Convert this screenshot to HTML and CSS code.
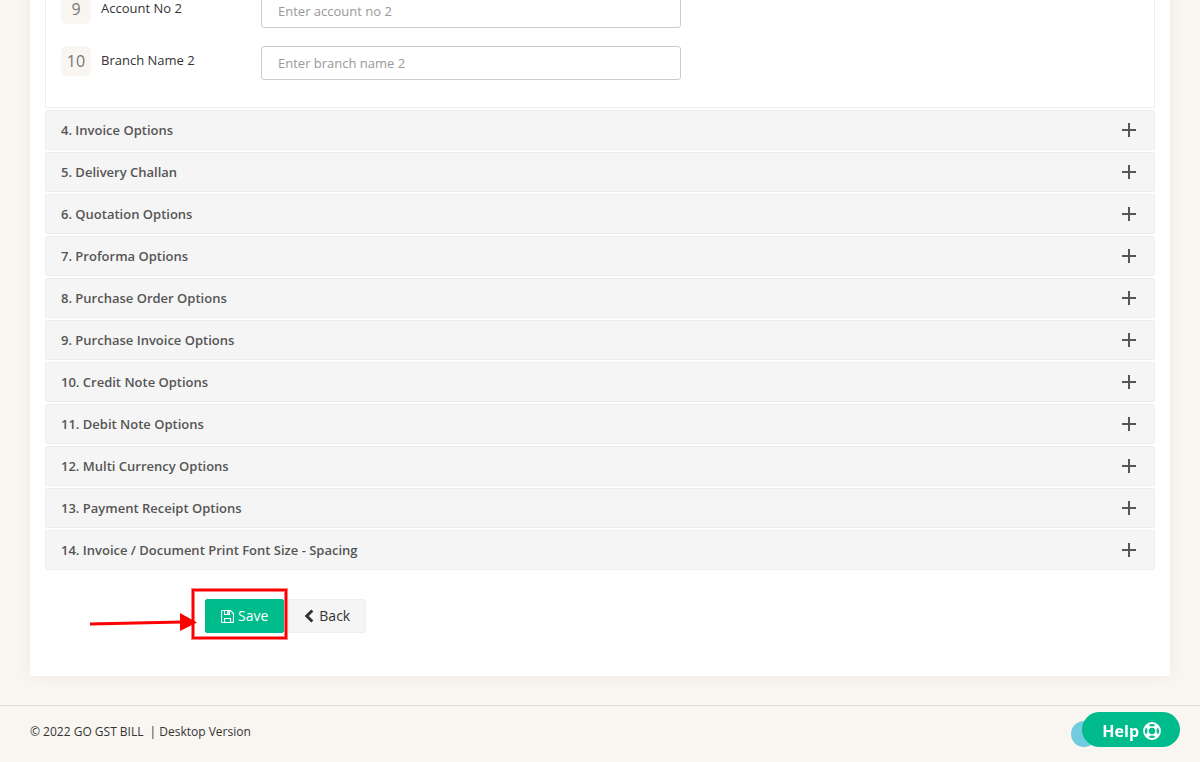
FILE: index.html
```html
<!DOCTYPE html>
<html lang="en">
<head>
<meta charset="utf-8">
<meta name="viewport" content="width=device-width, initial-scale=1">
<title>GO GST BILL</title>
<link rel="stylesheet" href="styles.css">
</head>
<body>

<main class="panel">
	<form action="#">
		<section class="section-body">
			<div class="form-row">
				<span class="num">9</span>
				<label for="account-no-2">Account No 2</label>
				<input type="text" id="account-no-2" class="form-control" placeholder="Enter account no 2">
			</div>
			<div class="form-row">
				<span class="num">10</span>
				<label for="branch-name-2">Branch Name 2</label>
				<input type="text" id="branch-name-2" class="form-control" placeholder="Enter branch name 2">
			</div>
		</section>

		<div class="accordion">
			<button type="button" class="accordion-head">4. Invoice Options<span class="plus"></span></button>
			<button type="button" class="accordion-head">5. Delivery Challan<span class="plus"></span></button>
			<button type="button" class="accordion-head">6. Quotation Options<span class="plus"></span></button>
			<button type="button" class="accordion-head">7. Proforma Options<span class="plus"></span></button>
			<button type="button" class="accordion-head">8. Purchase Order Options<span class="plus"></span></button>
			<button type="button" class="accordion-head">9. Purchase Invoice Options<span class="plus"></span></button>
			<button type="button" class="accordion-head">10. Credit Note Options<span class="plus"></span></button>
			<button type="button" class="accordion-head">11. Debit Note Options<span class="plus"></span></button>
			<button type="button" class="accordion-head">12. Multi Currency Options<span class="plus"></span></button>
			<button type="button" class="accordion-head">13. Payment Receipt Options<span class="plus"></span></button>
			<button type="button" class="accordion-head">14. Invoice / Document Print Font Size - Spacing<span class="plus"></span></button>
		</div>

		<div class="actions">
			<button type="submit" class="btn btn-save">
				<svg width="13" height="13" viewBox="0 0 13 13" fill="none" stroke="currentColor" aria-hidden="true">
					<path d="M1 .5h8.500l3 3V12l-.5.5H1L.5 12V1z" stroke-width="1.200"/>
					<path d="M3.500.5v4h5v-4M3.500 12.500v-4h6v4" stroke-width="1.100"/>
					<path d="M7 1v3" stroke-width="1.500"/>
				</svg>
				Save
			</button>
			<a href="#" class="btn btn-back">
				<svg width="10" height="14" viewBox="0 0 10 14" fill="none" stroke="currentColor" stroke-width="3" aria-hidden="true">
					<path d="M8.300 1.500 2.800 7l5.500 5.500"/>
				</svg>
				Back
			</a>
			<span class="marker"></span>
			<svg class="arrow" width="108" height="20" viewBox="0 0 108 20" aria-hidden="true">
				<path d="M0 12 92 10" stroke="#f00" stroke-width="3"/>
				<path d="M90 1v18l17-8.500z" fill="#f00"/>
			</svg>
		</div>
	</form>
</main>

<footer class="footer">
	<span>© 2022 GO GST BILL</span>
	<span>| <a href="#">Desktop Version</a></span>
</footer>

<span class="chat-bubble"></span>
<button type="button" class="help">
	Help
	<svg width="18" height="18" viewBox="0 0 18 18" fill="none" stroke="currentColor" aria-hidden="true">
		<circle cx="9" cy="9" r="8" stroke-width="1.800"/>
		<circle cx="9" cy="9" r="4" stroke-width="1.500"/>
		<path d="M3.500 3.500l3 3M14.500 3.500l-3 3M3.500 14.500l3-3M14.500 14.500l-3-3" stroke-width="4"/>
	</svg>
</button>

</body>
</html>
```
FILE: styles.css
```css
* {
	box-sizing: border-box;
}
body {
	margin: 0;
	background: #f9f6f1;
	color: #333;
	font: 13px/20px "Open Sans", sans-serif;
}
a {
	color: inherit;
	text-decoration: none;
}
button, input {
	font: inherit;
}

.panel {
	margin: -22px 30px 0;
	padding: 0 15px 43px;
	background: #fff;
	box-shadow: 0 0 16px rgba(0,0,0,0.05);
}
.section-body {
	padding: 16px 15px 27px;
	border: 1px solid #eee;
	border-top: 0;
	border-radius: 0 0 2px 2px;
}
.form-row {
	display: flex;
	align-items: flex-start;
}
.form-row + .form-row {
	margin-top: 18px;
}
.num {
	width: 30px;
	height: 30px;
	border-radius: 5px;
	background: #f9f6f1;
	color: #777;
	font-size: 16px;
	line-height: 30px;
	text-align: center;
}
.form-row label {
	width: 160px;
	margin-left: 10px;
	padding-top: 4px;
}
.form-control {
	width: 420px;
	height: 34px;
	padding: 0 16px;
	border: 1px solid #ccc;
	border-radius: 3px;
	background: #fff;
}
.form-control::placeholder {
	color: #999;
}

/* accordion */

.accordion {
	display: flex;
	flex-direction: column;
	gap: 2px;
	margin-top: 2px;
}
.accordion-head {
	display: flex;
	align-items: center;
	justify-content: space-between;
	height: 40px;
	padding: 0 18px 0 15px;
	border: 1px solid #eee;
	border-radius: 2px;
	background: #f5f5f5;
	color: #555;
	font-weight: 600;
	text-align: left;
	cursor: pointer;
}
.plus {
	width: 14px;
	height: 14px;
	background:
		linear-gradient(#555, #555) 50% 50% / 14px 2px no-repeat,
		linear-gradient(#555, #555) 50% 50% / 2px 14px no-repeat;
}

/* buttons */

.actions {
	position: relative;
	display: flex;
	gap: 4px;
	margin-top: 29px;
	padding-left: 160px;
}
.btn {
	display: flex;
	align-items: center;
	gap: 4px;
	height: 34px;
	padding: 0 15px;
	border: 1px solid #eee;
	border-radius: 2px;
	background: #f5f5f5;
	color: #333;
	font-size: 14px;
	cursor: pointer;
}
.btn-back {
	gap: 5px;
}
.btn-save {
	border-color: #00bb8b;
	background: #00bb8b;
	color: #fff;
}
.marker {
	position: absolute;
	top: -10px;
	left: 147px;
	width: 95px;
	height: 50px;
	border: 2px solid #f00;
	box-shadow: 0 0 0 1px rgba(255,0,0,0.5), inset 0 0 0 1px rgba(255,0,0,0.5);
}
.arrow {
	position: absolute;
	top: 13px;
	left: 45px;
}

/* footer */

.footer {
	display: flex;
	gap: 6px;
	margin-top: 29px;
	padding: 16px 30px;
	border-top: 1px solid #ddd;
	font-size: 12px;
}
.help {
	position: fixed;
	right: 20px;
	bottom: 15px;
	display: flex;
	align-items: center;
	gap: 4px;
	height: 35px;
	padding: 2px 19px 0 20px;
	border: 0;
	border-radius: 18px;
	background: #00bb8b;
	color: #fff;
	font-size: 16px;
	font-weight: 700;
	cursor: pointer;
}
.chat-bubble {
	position: fixed;
	right: 103px;
	bottom: 15px;
	width: 26px;
	height: 26px;
	border-radius: 13px;
	background: #72cce0;
}
```
